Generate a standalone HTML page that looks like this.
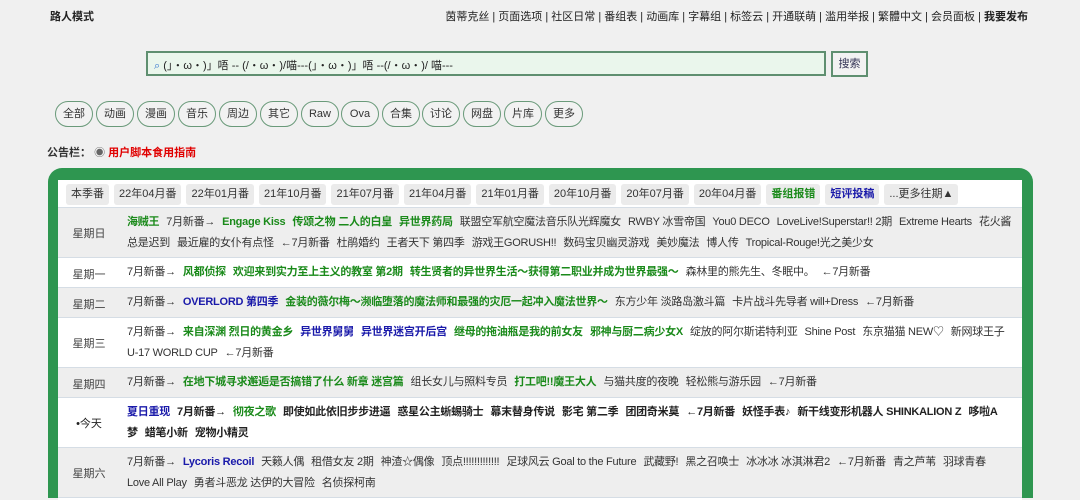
<!DOCTYPE html>
<html><head><meta charset="utf-8"><style>
*{margin:0;padding:0;box-sizing:border-box}
body{width:1080px;height:492px;overflow:hidden;background:#f0f0f0;font-family:"Liberation Sans","Noto Sans CJK SC",sans-serif;font-size:11px;color:#222;position:relative}
.a{position:absolute;white-space:nowrap}
.top{top:8px;font-size:11px}
.srch{left:146px;top:51px;width:680px;height:25px;border:2px solid #5f8f70;background:#eaf6ec;padding:4px 6px;font-size:11px;color:#222}
.btn{left:831px;top:51px;width:37px;height:26px;border:2px solid #5f8f70;background:#f2f2f2;text-align:center;line-height:22px;color:#335}
.cat{top:101px;height:26px;width:38px;border:1px solid #6a9a7a;border-radius:13px;text-align:center;line-height:24px;font-size:11px;color:#333;background:#f2f2f2}
.panel{left:48px;top:168px;width:985px;height:330px;background:#2e9650;border-radius:14px 14px 0 0}
.inner{position:absolute;left:10px;top:12px;width:964px;height:320px;background:#fff}
.hdr{height:28px;border-bottom:1px solid #d5dde5;padding:4px 0 0 8px;white-space:nowrap}
.chip{display:inline-block;background:#ebebeb;border-radius:3px;padding:0 5px;height:21px;line-height:21px;margin-right:5px;font-size:11px;color:#333}
.row{position:relative;border-bottom:1px solid #d5dde5;font-size:11px}
.row.g{background:#eeeeee}
.day{position:absolute;left:0;width:62px;text-align:center;color:#444}
.c{margin-left:69px;line-height:21px;padding:4px 0;white-space:nowrap;color:#333;letter-spacing:-0.25px}
.c span{margin-right:7px}
.gr{color:#1a8a1a;font-weight:bold}
.bl{color:#1a1aaa;font-weight:bold}
.bk{font-weight:bold;color:#222}
</style></head><body>
<div class="a top" style="left:50px;font-weight:bold">路人模式</div>
<div class="a top" style="right:52px;color:#222">茵蒂克丝 | 页面选项 | 社区日常 | 番组表 | 动画库 | 字幕组 | 标签云 | 开通联萌 | 滥用举报 | 繁體中文 | 会员面板 | <b>我要发布</b></div>
<div class="a srch"><span style="color:#3a7ad0">⌕</span> (」・ω・)」唔 -- (/・ω・)/喵---(」・ω・)」唔 --(/・ω・)/ 喵---</div>
<div class="a btn">搜索</div>
<div class="a cat" style="left:55px">全部</div>
<div class="a cat" style="left:96px">动画</div>
<div class="a cat" style="left:137px">漫画</div>
<div class="a cat" style="left:178px">音乐</div>
<div class="a cat" style="left:219px">周边</div>
<div class="a cat" style="left:260px">其它</div>
<div class="a cat" style="left:301px">Raw</div>
<div class="a cat" style="left:341px">Ova</div>
<div class="a cat" style="left:382px">合集</div>
<div class="a cat" style="left:422px">讨论</div>
<div class="a cat" style="left:463px">网盘</div>
<div class="a cat" style="left:504px">片库</div>
<div class="a cat" style="left:545px">更多</div>
<div class="a" style="left:47px;top:144px;font-weight:bold;color:#333">公告栏： <span style="color:#666;font-weight:normal">◉</span> <span style="color:#e00000">用户脚本食用指南</span></div>
<div class="a panel"><div class="inner">
<div class="hdr"><span class="chip">本季番</span><span class="chip">22年04月番</span><span class="chip">22年01月番</span><span class="chip">21年10月番</span><span class="chip">21年07月番</span><span class="chip">21年04月番</span><span class="chip">21年01月番</span><span class="chip">20年10月番</span><span class="chip">20年07月番</span><span class="chip">20年04月番</span><span class="chip gr">番组报错</span><span class="chip bl">短评投稿</span><span class="chip">...更多往期▲</span></div>
<div class="row g" style="height:50px"><div class="day" style="top:17px">星期日</div><div class="c"><span class="gr">海贼王</span><span>7月新番→</span><span class="gr">Engage Kiss</span><span class="gr">传颂之物 二人的白皇</span><span class="gr">异世界药局</span><span>联盟空军航空魔法音乐队光辉魔女</span><span>RWBY 冰雪帝国</span><span>You0 DECO</span><span>LoveLive!Superstar!! 2期</span><span>Extreme Hearts</span><span>花火酱</span><br><span>总是迟到</span><span>最近雇的女仆有点怪</span><span>←7月新番</span><span>杜鹃婚约</span><span>王者天下 第四季</span><span>游戏王GORUSH!!</span><span>数码宝贝幽灵游戏</span><span>美妙魔法</span><span>博人传</span><span>Tropical-Rouge!光之美少女</span></div></div>
<div class="row" style="height:30px"><div class="day" style="top:8px">星期一</div><div class="c"><span>7月新番→</span><span class="gr">风都侦探</span><span class="gr">欢迎来到实力至上主义的教室 第2期</span><span class="gr">转生贤者的异世界生活～获得第二职业并成为世界最强～</span><span>森林里的熊先生、冬眠中。</span><span>←7月新番</span></div></div>
<div class="row g" style="height:30px"><div class="day" style="top:8px">星期二</div><div class="c"><span>7月新番→</span><span class="bl">OVERLORD 第四季</span><span class="gr">金装的薇尔梅～濒临堕落的魔法师和最强的灾厄一起冲入魔法世界～</span><span>东方少年 淡路岛激斗篇</span><span>卡片战斗先导者 will+Dress</span><span>←7月新番</span></div></div>
<div class="row" style="height:50px"><div class="day" style="top:17px">星期三</div><div class="c"><span>7月新番→</span><span class="gr">来自深渊 烈日的黄金乡</span><span class="bl">异世界舅舅</span><span class="bl">异世界迷宫开后宫</span><span class="gr">继母的拖油瓶是我的前女友</span><span class="gr">邪神与厨二病少女X</span><span>绽放的阿尔斯诺特利亚</span><span>Shine Post</span><span>东京猫猫 NEW♡</span><span>新网球王子</span><br><span>U-17 WORLD CUP</span><span>←7月新番</span></div></div>
<div class="row g" style="height:30px"><div class="day" style="top:8px">星期四</div><div class="c"><span>7月新番→</span><span class="gr">在地下城寻求邂逅是否搞错了什么 新章 迷宫篇</span><span>组长女儿与照料专员</span><span class="gr">打工吧!!魔王大人</span><span>与猫共度的夜晚</span><span>轻松熊与游乐园</span><span>←7月新番</span></div></div>
<div class="row" style="height:50px"><div class="day" style="top:17px;color:#222">•今天</div><div class="c bk"><span class="bl">夏日重现</span><span>7月新番→</span><span class="gr">彻夜之歌</span><span>即使如此依旧步步进逼</span><span>惑星公主蜥蜴骑士</span><span>幕末替身传说</span><span>影宅 第二季</span><span>团团奇米莫</span><span>←7月新番</span><span>妖怪手表♪</span><span>新干线变形机器人 SHINKALION Z</span><span>哆啦A</span><br><span>梦</span><span>蜡笔小新</span><span>宠物小精灵</span></div></div>
<div class="row g" style="height:50px"><div class="day" style="top:17px">星期六</div><div class="c"><span>7月新番→</span><span class="bl">Lycoris Recoil</span><span>天籁人偶</span><span>租借女友 2期</span><span>神渣☆偶像</span><span>顶点!!!!!!!!!!!!!</span><span>足球风云 Goal to the Future</span><span>武藏野!</span><span>黑之召唤士</span><span>冰冰冰 冰淇淋君2</span><span>←7月新番</span><span>青之芦苇</span><span>羽球青春</span><br><span>Love All Play</span><span>勇者斗恶龙 达伊的大冒险</span><span>名侦探柯南</span></div></div>
</div></div>
</body></html>
